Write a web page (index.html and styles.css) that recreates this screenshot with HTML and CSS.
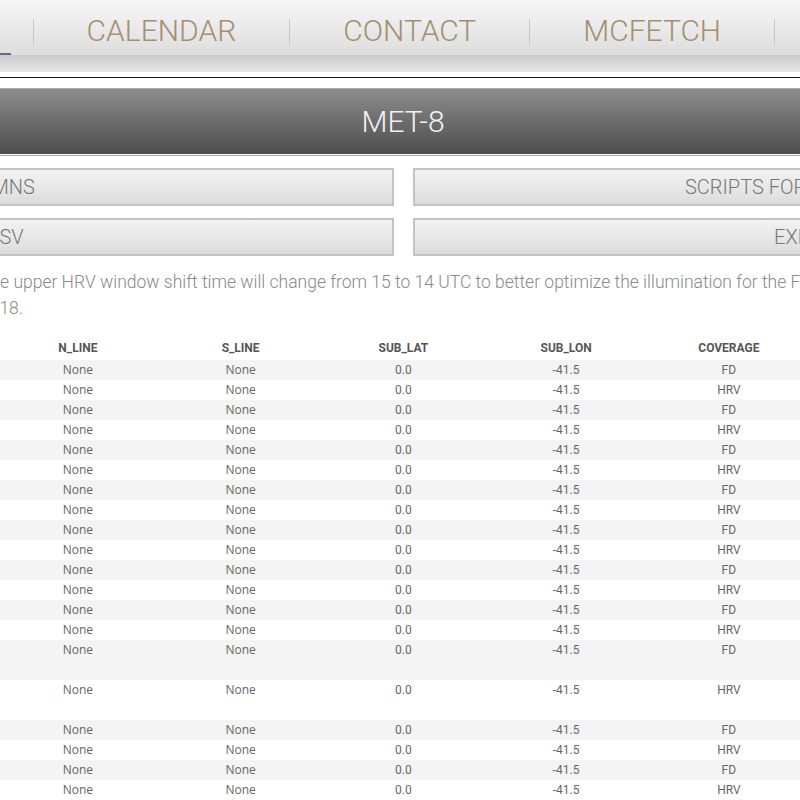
FILE: index.html
```html
<!DOCTYPE html>
<html>
<head>
<meta charset="utf-8">
<link rel="stylesheet" href="styles.css">
</head>
<body>
<div class="page">
  <nav class="nav">
    <div class="nav-list">
      <a class="nav-item active">HOME</a><span class="sep"></span>
      <a class="nav-item">CALENDAR</a><span class="sep"></span>
      <a class="nav-item">CONTACT</a><span class="sep"></span>
      <a class="nav-item">MCFETCH</a><span class="sep"></span>
      <a class="nav-item">ABOUT</a>
    </div>
  </nav>
  <div class="nav-shadow"></div>
  <div class="rule-black"></div>
  <div class="title-band">
    <h1 class="title">MET-8</h1>
  </div>
  <div class="buttons">
    <div class="btn btn-left">COLUMNS</div>
    <div class="btn">SCRIPTS FOR DOWNLOADS</div>
    <div class="btn btn-csv">GET CSV</div>
    <div class="btn btn-export">EXPORT</div>
  </div>
  <p class="notice">The upper HRV window shift time will change from 15 to 14 UTC to better optimize the illumination for the Full Disk scans starting on<br>2018.</p>
  <table class="data">
    <colgroup>
      <col class="c"><col class="c"><col class="c"><col class="c"><col class="c"><col class="c"><col class="c"><col class="c">
    </colgroup>
    <thead>
      <tr><th>DATE</th><th>TIME</th><th>N_LINE</th><th>S_LINE</th><th>SUB_LAT</th><th>SUB_LON</th><th>COVERAGE</th><th>NOTES</th></tr>
    </thead>
    <tbody>
      <tr><td></td><td></td><td class="none">None</td><td class="none">None</td><td>0.0</td><td>-41.5</td><td>FD</td><td></td></tr>
      <tr><td></td><td></td><td class="none">None</td><td class="none">None</td><td>0.0</td><td>-41.5</td><td>HRV</td><td></td></tr>
      <tr><td></td><td></td><td class="none">None</td><td class="none">None</td><td>0.0</td><td>-41.5</td><td>FD</td><td></td></tr>
      <tr><td></td><td></td><td class="none">None</td><td class="none">None</td><td>0.0</td><td>-41.5</td><td>HRV</td><td></td></tr>
      <tr><td></td><td></td><td class="none">None</td><td class="none">None</td><td>0.0</td><td>-41.5</td><td>FD</td><td></td></tr>
      <tr><td></td><td></td><td class="none">None</td><td class="none">None</td><td>0.0</td><td>-41.5</td><td>HRV</td><td></td></tr>
      <tr><td></td><td></td><td class="none">None</td><td class="none">None</td><td>0.0</td><td>-41.5</td><td>FD</td><td></td></tr>
      <tr><td></td><td></td><td class="none">None</td><td class="none">None</td><td>0.0</td><td>-41.5</td><td>HRV</td><td></td></tr>
      <tr><td></td><td></td><td class="none">None</td><td class="none">None</td><td>0.0</td><td>-41.5</td><td>FD</td><td></td></tr>
      <tr><td></td><td></td><td class="none">None</td><td class="none">None</td><td>0.0</td><td>-41.5</td><td>HRV</td><td></td></tr>
      <tr><td></td><td></td><td class="none">None</td><td class="none">None</td><td>0.0</td><td>-41.5</td><td>FD</td><td></td></tr>
      <tr><td></td><td></td><td class="none">None</td><td class="none">None</td><td>0.0</td><td>-41.5</td><td>HRV</td><td></td></tr>
      <tr><td></td><td></td><td class="none">None</td><td class="none">None</td><td>0.0</td><td>-41.5</td><td>FD</td><td></td></tr>
      <tr><td></td><td></td><td class="none">None</td><td class="none">None</td><td>0.0</td><td>-41.5</td><td>HRV</td><td></td></tr>
      <tr class="tall"><td></td><td></td><td class="none">None</td><td class="none">None</td><td>0.0</td><td>-41.5</td><td>FD</td><td></td></tr>
      <tr class="tall"><td></td><td></td><td class="none">None</td><td class="none">None</td><td>0.0</td><td>-41.5</td><td>HRV</td><td></td></tr>
      <tr><td></td><td></td><td class="none">None</td><td class="none">None</td><td>0.0</td><td>-41.5</td><td>FD</td><td></td></tr>
      <tr><td></td><td></td><td class="none">None</td><td class="none">None</td><td>0.0</td><td>-41.5</td><td>HRV</td><td></td></tr>
      <tr><td></td><td></td><td class="none">None</td><td class="none">None</td><td>0.0</td><td>-41.5</td><td>FD</td><td></td></tr>
      <tr><td></td><td></td><td class="none">None</td><td class="none">None</td><td>0.0</td><td>-41.5</td><td>HRV</td><td></td></tr>
    </tbody>
  </table>
</div>
</body>
</html>
```

FILE: styles.css
```css
html, body {
  margin: 0;
  padding: 0;
  background: #ffffff;
  overflow: hidden;
  width: 800px;
  height: 800px;
}

.page {
  width: 1600px;
  margin-left: -397px;
  font-family: Roboto, "Liberation Sans", sans-serif;
}

.nav {
  height: 55px;
  background: linear-gradient(#f7f7f7, #dddddd);
}

.nav-list {
  display: flex;
  align-items: center;
  height: 55px;
  padding-left: 239px;
}

.nav-item {
  position: relative;
  box-sizing: border-box;
  display: flex;
  align-items: center;
  height: 55px;
  padding: 6px 53px 0;
  font-size: 30px;
  font-weight: 300;
  color: #a58f6f;
}

.nav-item.active::after {
  content: "";
  position: absolute;
  left: 22px;
  right: 22px;
  bottom: 0;
  height: 2px;
  background: #5d6b99;
}

.sep {
  width: 1px;
  height: 26px;
  background: #c9c6c2;
  margin-top: 9px;
}

.nav-shadow {
  height: 17px;
  background: linear-gradient(#c9c9c9, #e6e6e6);
}

.rule-black {
  margin-top: 5px;
  height: 10px;
  border-top: 1px solid #111111;
  border-bottom: 1px solid #aaaaaa;
}

.title-band {
  height: 65px;
  background: linear-gradient(#8d8d8d, #4c4c4c);
  border-bottom: 1px solid #ffffff;
  box-shadow: 0 1px 0 #a5a5a5;
  display: flex;
  align-items: center;
  justify-content: center;
}

.title {
  margin: 0;
  font-size: 30px;
  font-weight: 300;
  color: #f2f2f2;
}

.buttons {
  display: grid;
  grid-template-columns: 1fr 1fr;
  gap: 12px 19px;
  margin-top: 13px;
}

.btn {
  height: 34px;
  border: 2px solid #c3c3c3;
  background: linear-gradient(#f3f3f3, #dcdcdc);
  display: flex;
  align-items: center;
  justify-content: center;
  font-size: 20px;
  font-weight: 300;
  color: #777777;
}

.btn-left {
  padding-right: 20px;
}

.btn-csv {
  padding-right: 28px;
}

.btn-export {
  padding-left: 6px;
}

.notice {
  margin: 13px 0 0 377px;
  font-size: 17.5px;
  line-height: 26px;
  font-weight: 300;
  color: #898989;
  white-space: nowrap;
}

.data {
  margin-top: 15px;
  margin-left: 68px;
  border-collapse: collapse;
  table-layout: fixed;
  width: 1302px;
}

.data .c {
  width: 162.7px;
}

.data th {
  font-size: 12px;
  line-height: 14px;
  font-weight: 700;
  color: #555555;
  padding: 5px 0 5px;
  text-align: center;
}

.data td {
  font-size: 12px;
  line-height: 14px;
  color: #666666;
  padding: 3px 0;
  text-align: center;
  vertical-align: top;
  height: 14px;
}

.data td.none {
  font-family: "Open Sans", Roboto, sans-serif;
}

.data tbody tr:nth-child(odd) {
  background: #f4f4f4;
}

.data tr.tall td {
  height: 34px;
}
```
